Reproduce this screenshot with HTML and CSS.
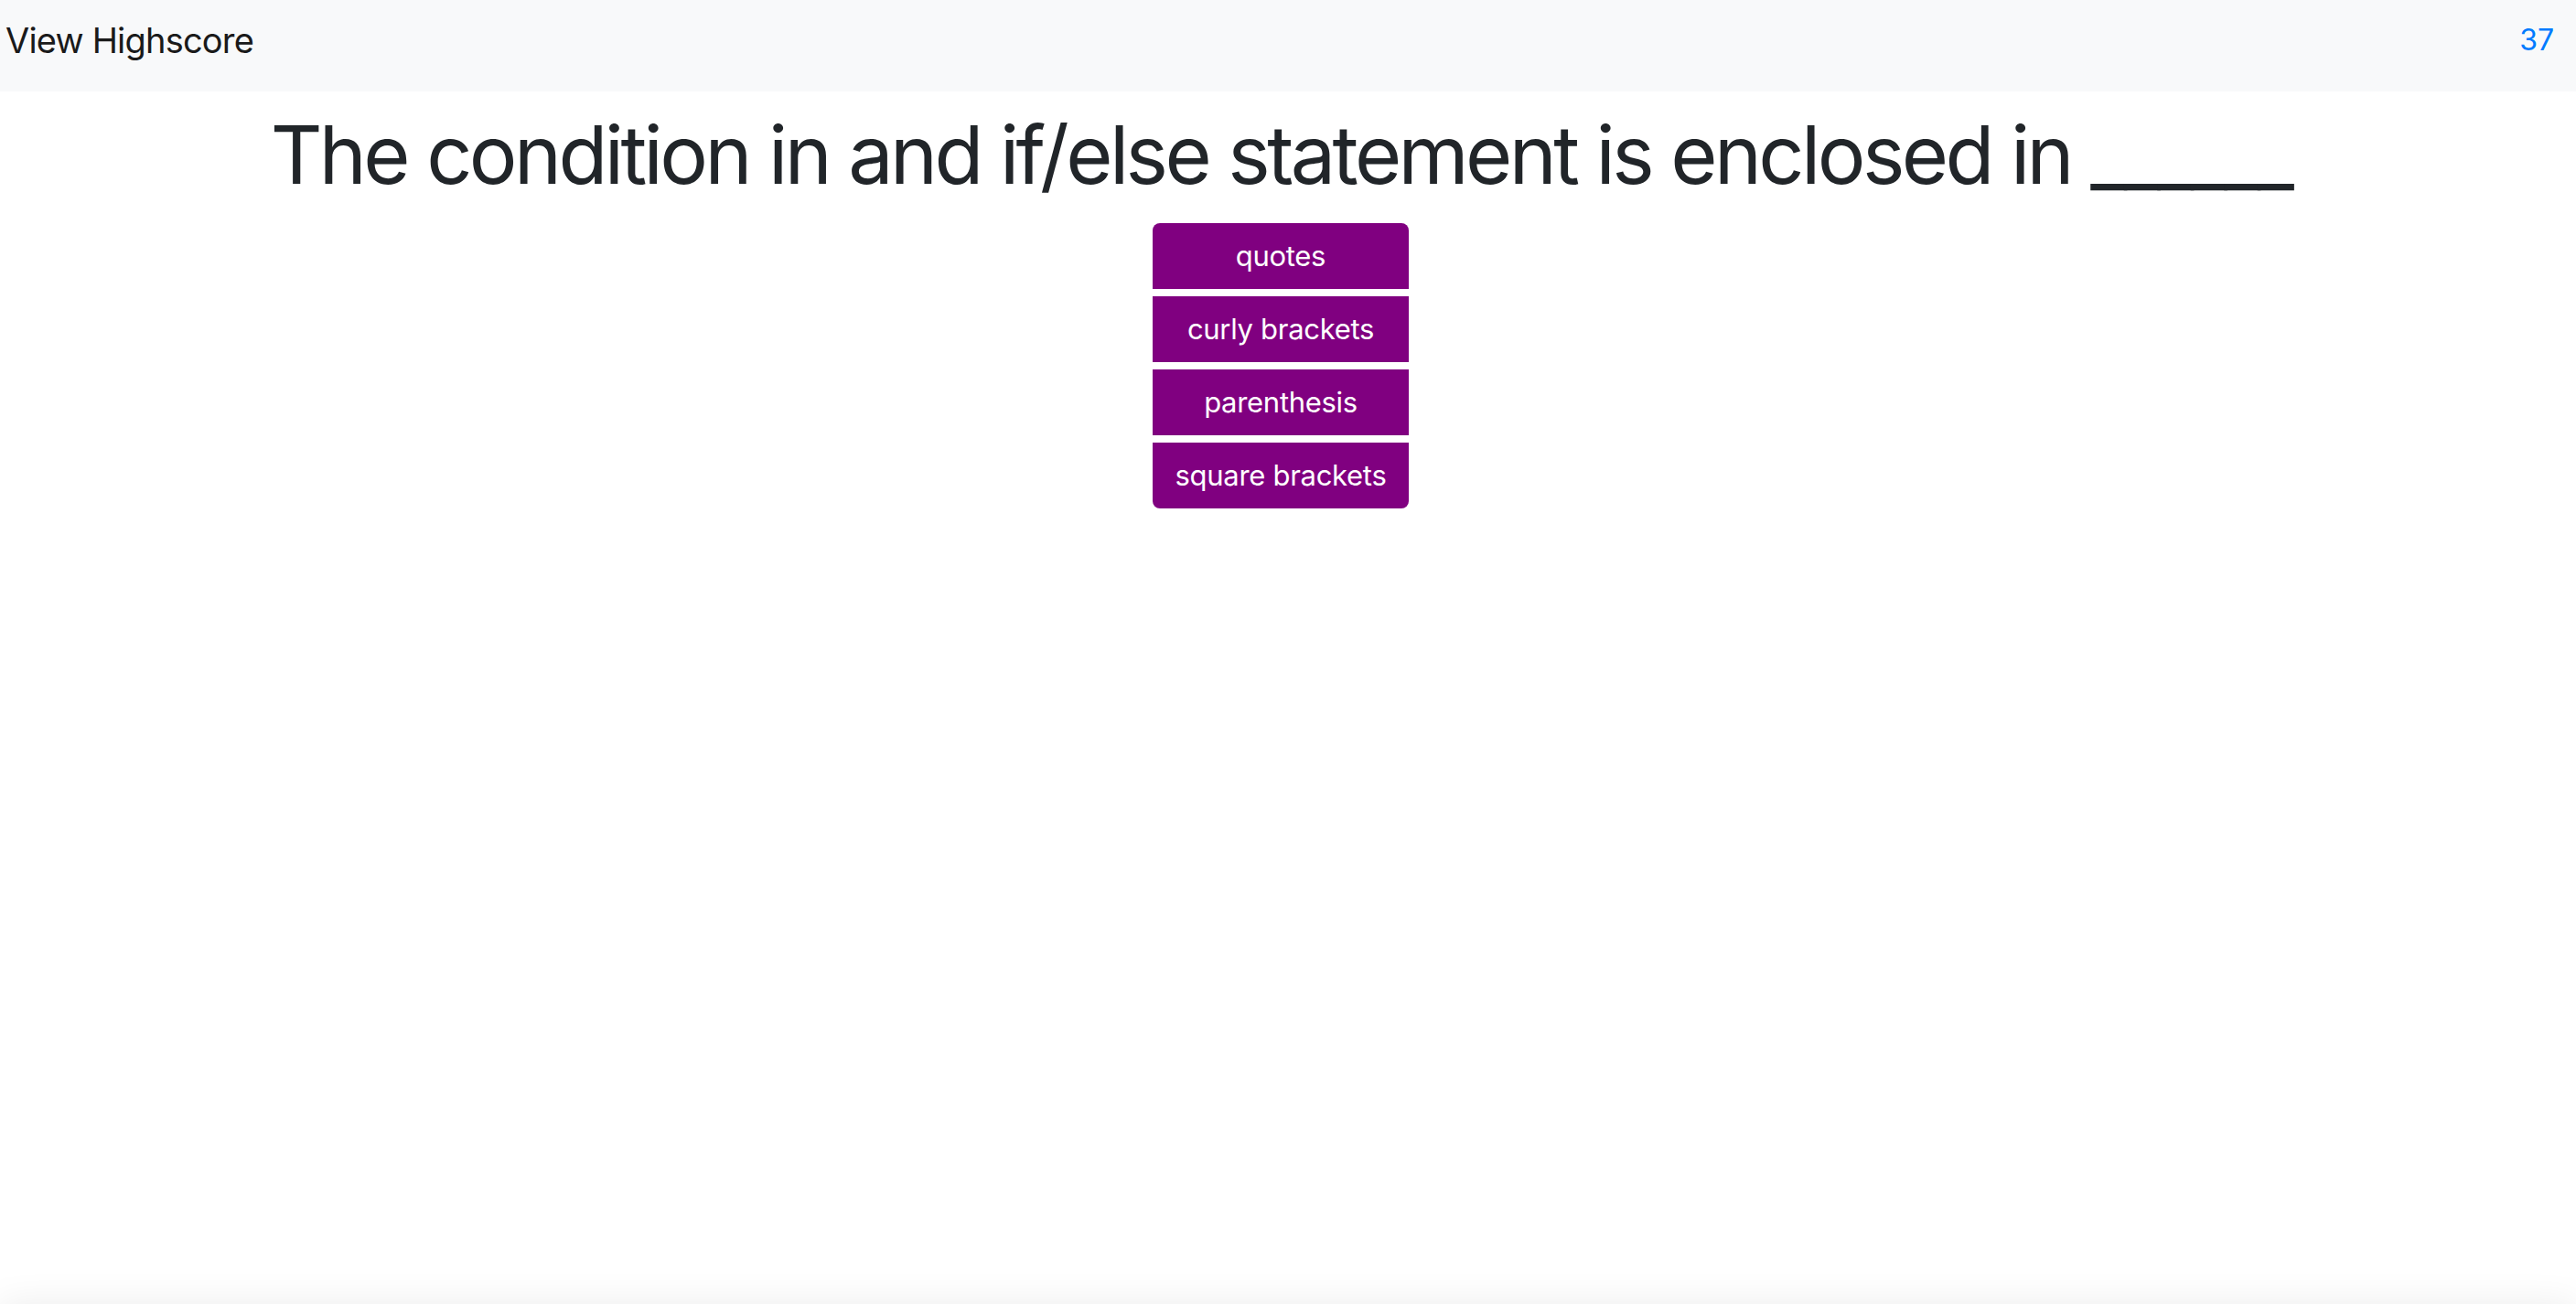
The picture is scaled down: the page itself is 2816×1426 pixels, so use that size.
FILE: index.html
```html
<!DOCTYPE html>
<html lang="en">
<head>
<meta charset="utf-8">
<title>Quiz</title>
<link rel="stylesheet" href="styles.css">
</head>
<body>
<nav class="navbar">
  <a class="brand" href="#">View Highscore</a>
  <span class="timer">37</span>
</nav>
<main class="quiz">
  <h1 class="question">The condition in and if/else statement is enclosed in ______</h1>
  <div class="choices">
    <button class="choice">quotes</button>
    <button class="choice">curly brackets</button>
    <button class="choice">parenthesis</button>
    <button class="choice">square brackets</button>
  </div>
</main>
<div class="bottom-shadow"></div>
</body>
</html>
```
FILE: styles.css
```css
html, body {
  margin: 0;
  padding: 0;
  background: #fff;
  font-family: Inter, "Liberation Sans", sans-serif;
  color: #212529;
  overflow: hidden;
}
.navbar {
  height: 100px;
  box-sizing: border-box;
  background: #f8f9fa;
  display: flex;
  align-items: center;
  justify-content: space-between;
  padding: 0 24px 12px 6px;
}
.brand {
  font-size: 38px;
  letter-spacing: -0.8px;
  color: #1a1a1a;
  text-decoration: none;
  line-height: 1;
}
.timer {
  font-size: 32px;
  color: #007bff;
  line-height: 1;
}
.quiz {
  display: flex;
  flex-direction: column;
  align-items: center;
  padding-right: 16px;
}
.question {
  margin: 17px 0 21px;
  font-size: 88px;
  font-weight: 400;
  letter-spacing: -3.6px;
  line-height: 1.2;
  white-space: nowrap;
}
.choices {
  display: flex;
  flex-direction: column;
  gap: 8px;
  width: 280px;
}
.choice {
  height: 72px;
  border: none;
  background: #800080;
  color: #fff;
  font-family: Inter, "Liberation Sans", sans-serif;
  font-size: 31px;
  letter-spacing: -0.3px;
  padding: 0;
  cursor: pointer;
}
.choice:first-child {
  border-radius: 8px 8px 0 0;
}
.choice:last-child {
  border-radius: 0 0 8px 8px;
}
.bottom-shadow {
  position: fixed;
  left: 0;
  right: 0;
  top: 100%;
  height: 60px;
  box-shadow: 0 0 40px rgba(0,0,0,0.08);
}
```
